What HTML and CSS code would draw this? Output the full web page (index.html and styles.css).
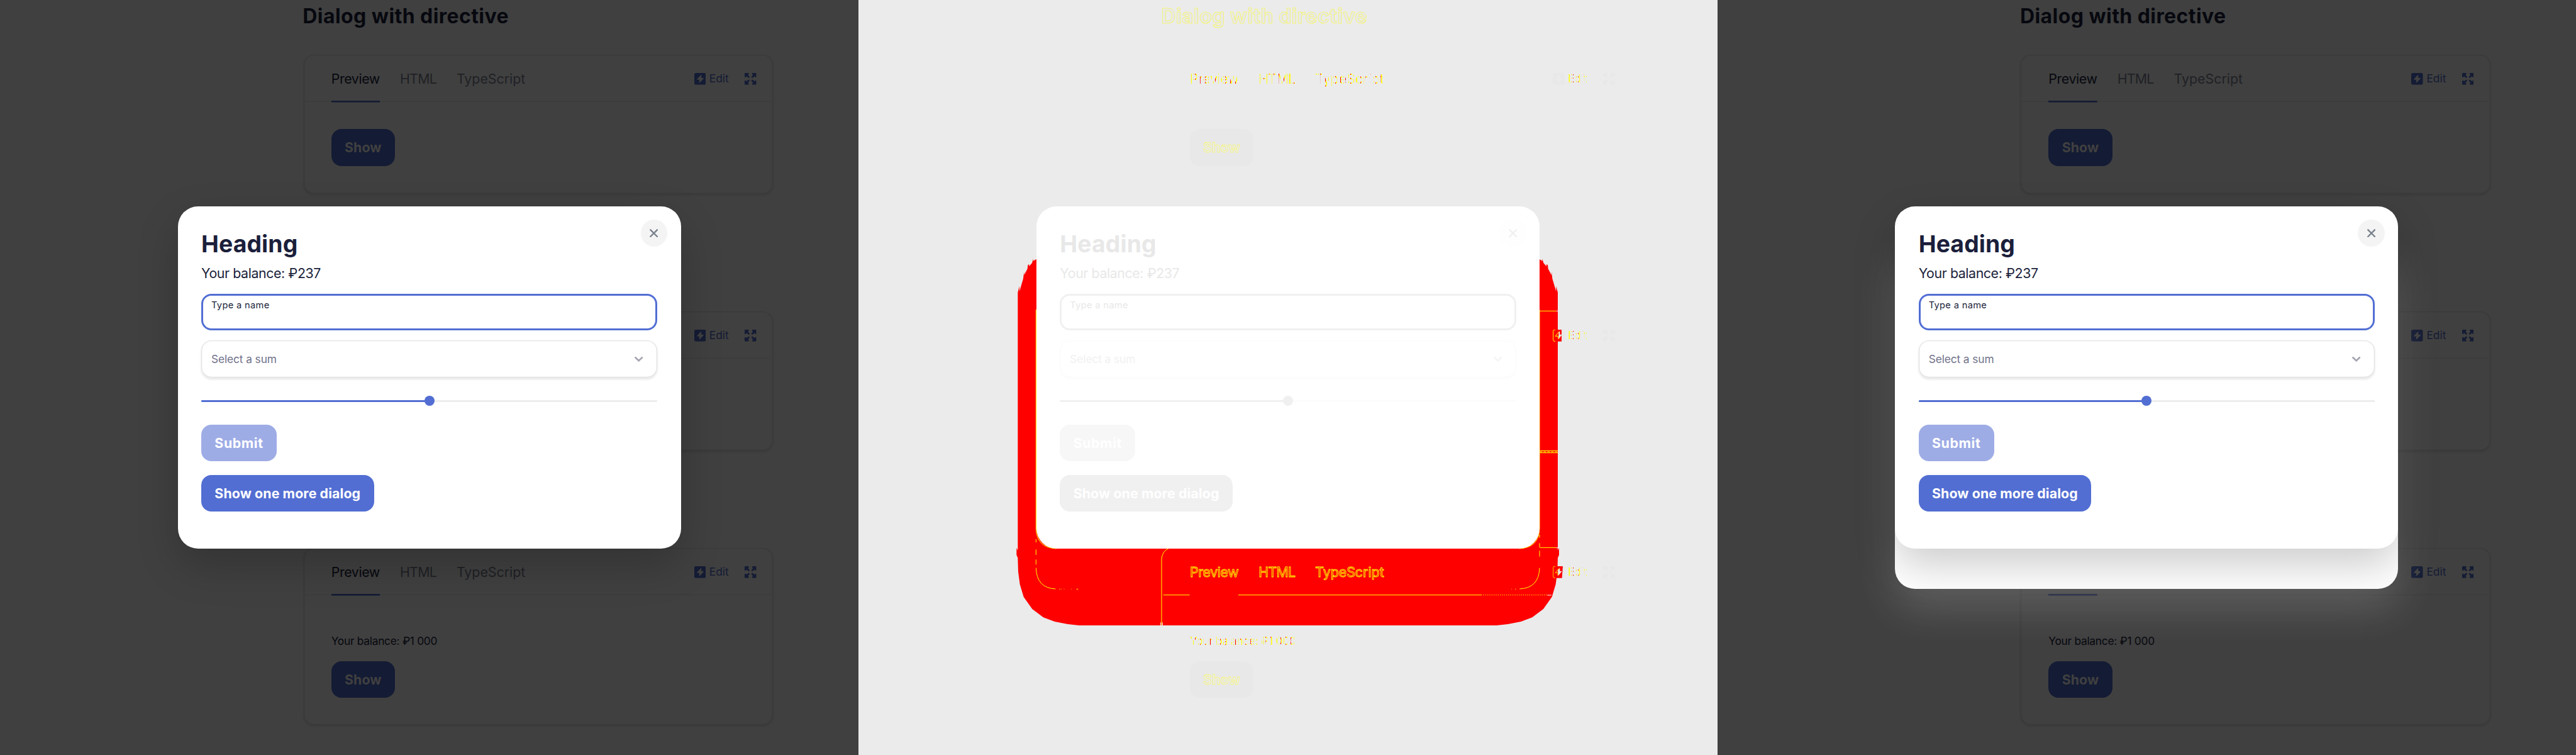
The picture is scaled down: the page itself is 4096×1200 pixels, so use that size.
FILE: index.html
```
<!DOCTYPE html>
<html lang="en">
<head>
<meta charset="utf-8">
<title>Dialog visual comparison</title>
<link rel="stylesheet" href="styles.css">
</head>
<body>
<svg class="defs" aria-hidden="true">
  <symbol id="bolt" viewBox="0 0 28 28"><path fill-rule="evenodd" fill="currentColor" d="M4 0H24Q28 0 28 4V24Q28 28 24 28H4Q0 28 0 24V4Q0 0 4 0ZM15.5 5L6.5 14.5Q5.5 16 7 16.3H12.3L11.5 22Q12 23.6 13.3 22.8L22 13.5Q22.6 12 21.3 11.8H16.2L17.3 6Q17 4.300 15.500 5Z"/></symbol>
  <symbol id="expand" viewBox="0 0 28 28"><g fill="currentColor"><path id="arm" d="M1 0H9Q11.500 .8 9.700 3L8 4.600L11.800 9Q12.200 12 9 11.800L4.600 8L3 9.700Q.8 11.500 0 9V1Z"/><use href="#arm" transform="matrix(-1 0 0 1 28 0)"/><use href="#arm" transform="matrix(1 0 0 -1 0 28)"/><use href="#arm" transform="matrix(-1 0 0 -1 28 28)"/></g></symbol>
  <symbol id="cross" viewBox="0 0 20 20"><path d="M2 2L18 18M18 2L2 18" fill="none" stroke="currentColor" stroke-width="3.600" stroke-linecap="round"/></symbol>
  <symbol id="chevron" viewBox="0 0 20 12"><path d="M2 2L10 9.500L18 2" fill="none" stroke="currentColor" stroke-width="4" stroke-linecap="round"/></symbol>
</svg>

<main class="panes">
  <section class="pane">
    <div class="page">
      <h2 class="title">Dialog with directive</h2>
      <article class="card">
        <header class="head"><nav class="tabs"><span class="tab active">Preview</span><span class="tab html">HTML</span><span class="tab ts">TypeScript</span></nav><span class="edit"><svg class="icon"><use href="#bolt"/></svg>Edit</span><svg class="icon"><use href="#expand"/></svg></header>
        <div class="body"><button class="btn show">Show</button></div>
      </article>
      <article class="card second">
        <header class="head"><span class="edit"><svg class="icon"><use href="#bolt"/></svg>Edit</span><svg class="icon"><use href="#expand"/></svg></header>
      </article>
      <article class="card third">
        <header class="head"><nav class="tabs"><span class="tab active">Preview</span><span class="tab html">HTML</span><span class="tab ts">TypeScript</span></nav><span class="edit"><svg class="icon"><use href="#bolt"/></svg>Edit</span><svg class="icon"><use href="#expand"/></svg></header>
        <div class="body tall"><p class="note">Your balance: ₽1 000</p><button class="btn show">Show</button></div>
      </article>
    </div>
    <div class="dialog">
      <span class="close"><svg><use href="#cross"/></svg></span>
      <h1 class="heading">Heading</h1>
      <p class="balance">Your balance: ₽237</p>
      <div class="field"><span class="label">Type a name</span></div>
      <div class="select"><span>Select a sum</span><svg><use href="#chevron"/></svg></div>
      <div class="slider"><i class="thumb"></i></div>
      <button class="btn submit">Submit</button>
      <button class="btn more">Show one more dialog</button>
    </div>
  </section>

  <section class="pane diff">
    <svg class="mask" viewBox="0 0 2048 1800">
      <path fill="#f00" d="M424 618L417 622V617L414 627L407 635V630L404 632L403 641L395 656V647L393 664L384 695V682L380 697V1312L377 1306V1323L380 1330L381 1363L385 1393L394 1423L414.500 1452L441 1472L468 1482L499 1488L526 1491H1522L1549 1488L1580 1482L1607 1472L1633.500 1452L1654 1423L1663 1393L1667 1363L1668 1330L1671 1323V1306L1668 1312V697L1664 682V695L1655 664L1653 647V656L1645 641L1644 632L1641 630V635L1634 627L1631 617V622L1624 618Z"/>
      <g fill="none" stroke="#ff0" stroke-width="1.500">
        <path d="M423.500 738V1260Q425 1306 472 1308"/>
        <path d="M1624.500 738V1260Q1623 1306 1576 1308"/>
        <path d="M423.500 1285v8M423.500 1310v13M423.500 1334v12M423.500 1354Q425 1402 470 1404M479 1404.500h2M483 1404.500h1M490 1404.500h1M507 1404.500h1M520 1404.500h4"/>
        <path d="M1624.500 1275v7M1624.500 1295v10M1624.500 1313v14M1624.500 1354Q1623 1402 1577 1404M1568 1404.500h-2M1558 1404.500h-1"/>
        <path d="M739 1308Q725 1314 723 1332V1491M727 1418.500H790M906 1418.500H1485"/>
        <path d="M1485 1418.500H1642" stroke-dasharray="2 3"/>
        <path d="M1625 741.500H1664M1625 1305.500H1664"/>
        <path d="M1625 1074.500H1668M1625 1079.500H1668" />
        <path d="M1625 1077H1668" stroke-dasharray="6 3"/>
      </g>
      <path d="M721 1484v7M725 1484v7M1643 1419h10M1664 741.500h5M1664 1306h6" stroke="#fff" stroke-width="1.500"/>
    </svg>
    <div class="page">
      <h2 class="title">Dialog with directive</h2>
      <article class="card">
        <header class="head"><nav class="tabs"><span class="tab active">Preview</span><span class="tab html">HTML</span><span class="tab ts">TypeScript</span></nav><span class="edit"><svg class="icon"><use href="#bolt"/></svg><span class="edit-text">Edit</span></span><svg class="icon"><use href="#expand"/></svg></header>
        <div class="body"><button class="btn show">Show</button></div>
      </article>
      <article class="card second">
        <header class="head"><span class="edit"><svg class="icon" viewBox="0 0 28 28"><path fill="#e8e8e8" d="M20 0H24Q28 0 28 4V24Q28 28 24 28H20Z"/><path fill="#f00" d="M4 0H21V28H4Q0 28 0 24V4Q0 0 4 0Z"/><path fill="#ebebeb" d="M14 5L17 4V11.500H22L14 23Z"/><path d="M6 .5H3Q1 1 1 4V24Q1 27 3 27.500H6M15 5L6 15.500H13V22" fill="none" stroke="#ff0" stroke-width="1.500"/></svg><span class="edit-text">Edit</span></span><svg class="icon"><use href="#expand"/></svg></header>
      </article>
      <article class="card third">
        <header class="head"><nav class="tabs hot"><span class="tab active">Preview</span><span class="tab html">HTML</span><span class="tab ts">TypeScript</span></nav><span class="edit"><svg class="icon" viewBox="0 0 28 28"><path fill="#e8e8e8" d="M22 0H24Q28 0 28 4V24Q28 28 24 28H20Z"/><path fill="#f00" d="M4 0H24L22 28H4Q0 28 0 24V4Q0 0 4 0Z"/><path fill="#ebebeb" d="M12 9L17 4V11.500H22L13 23Z"/><path d="M6 .5H3Q1 1 1 4V24Q1 27 3 27.500H6M15 5L6 15.500H12V22" fill="none" stroke="#ff0" stroke-width="1.200"/></svg><span class="edit-text">Edit</span></span><svg class="icon"><use href="#expand"/></svg></header>
        <div class="body tall"><p class="note">Your balance: ₽1 000</p><button class="btn show">Show</button></div>
      </article>
    </div>
    <div class="dialog">
      <span class="close"><svg><use href="#cross"/></svg></span>
      <h1 class="heading">Heading</h1>
      <p class="balance">Your balance: ₽237</p>
      <div class="field"><span class="label">Type a name</span></div>
      <div class="select"><span>Select a sum</span><svg><use href="#chevron"/></svg></div>
      <div class="slider"><i class="thumb"></i></div>
      <button class="btn submit">Submit</button>
      <button class="btn more">Show one more dialog</button>
    </div>
  </section>

  <section class="pane">
    <div class="page">
      <h2 class="title">Dialog with directive</h2>
      <article class="card">
        <header class="head"><nav class="tabs"><span class="tab active">Preview</span><span class="tab html">HTML</span><span class="tab ts">TypeScript</span></nav><span class="edit"><svg class="icon"><use href="#bolt"/></svg>Edit</span><svg class="icon"><use href="#expand"/></svg></header>
        <div class="body"><button class="btn show">Show</button></div>
      </article>
      <article class="card second">
        <header class="head"><span class="edit"><svg class="icon"><use href="#bolt"/></svg>Edit</span><svg class="icon"><use href="#expand"/></svg></header>
      </article>
      <article class="card third">
        <header class="head"><nav class="tabs"><span class="tab active"></span></nav><span class="edit"><svg class="icon"><use href="#bolt"/></svg>Edit</span><svg class="icon"><use href="#expand"/></svg></header>
        <div class="body tall"><p class="note">Your balance: ₽1 000</p><button class="btn show">Show</button></div>
      </article>
    </div>
    <div class="backdrop-dialog"></div>
    <div class="dialog">
      <span class="close"><svg><use href="#cross"/></svg></span>
      <h1 class="heading">Heading</h1>
      <p class="balance">Your balance: ₽237</p>
      <div class="field"><span class="label">Type a name</span></div>
      <div class="select"><span>Select a sum</span><svg><use href="#chevron"/></svg></div>
      <div class="slider"><i class="thumb"></i></div>
      <button class="btn submit">Submit</button>
      <button class="btn more">Show one more dialog</button>
    </div>
  </section>
</main>
</body>
</html>
```
FILE: styles.css
```
/* three panes of 20.48rem by 18rem fill the window width */
html { font-size: calc(100vw / 61.44); }
* { box-sizing: border-box; margin: 0; padding: 0; }
body { font-family: Inter, "Liberation Sans", sans-serif; overflow: hidden; }
.defs { position: absolute; width: 0; height: 0; }
.panes { display: flex; }

.pane {
  --bg: #404040;
  --line: #3a3a3a;
  --ink: #07080f;
  --muted: #1f2125;
  --accent: #141b34;
  --btn-text: #404040;
  --card-shadow: 0 .03rem .06rem rgba(0, 0, 0, .12);
  --d-ink: #1b1f3b;
  --d-accent: #526ed3;
  --d-submit: #9eace6;
  --d-close: #f4f4f4;
  --d-cross: #79818c;
  --d-line: #e4e4e4;
  --d-soft: #70728a;
  --d-chevron: #a4a5b1;
  --d-track: #ededed;
  --d-shadow: 0 .4rem 1rem rgba(0, 0, 0, .2);
  --d-field-shadow: 0 .04rem .06rem rgba(0, 0, 0, .1);
  position: relative;
  flex: none;
  width: 20.48rem;
  height: 18rem;
  overflow: hidden;
  background: var(--bg);
}
.diff {
  --bg: #ebebeb;
  --line: transparent;
  --ink: #e8e8e8;
  --muted: #e9e9e9;
  --accent: #e8e8e8;
  --btn-text: #ebebeb;
  --card-shadow: 0 0 0 transparent;
  --d-ink: #e8e8e8;
  --d-accent: #f0f0f0;
  --d-submit: #f7f7f7;
  --d-close: #fefefe;
  --d-cross: #f0f0f0;
  --d-line: #fbfbfb;
  --d-soft: #f1f1f1;
  --d-chevron: #f5f5f5;
  --d-track: #fcfcfc;
  --d-shadow: none;
  --d-field-shadow: 0 .04rem .06rem rgba(0, 0, 0, .012);
}
.mask { position: absolute; inset: 0; width: 100%; height: 100%; }

.page { position: relative; width: 11.2rem; margin-left: 7.24rem; padding-top: .085rem; }
.title { margin-left: -.02rem; font-size: .48rem; line-height: .6rem; font-weight: 700; letter-spacing: .0135em; color: var(--ink); white-space: nowrap; }
.card { height: 3.32rem; margin-top: .615rem; border-radius: .24rem; box-shadow: inset 0 0 0 .02rem var(--line), var(--card-shadow); }
.second { margin-top: 2.8rem; }
.third { height: 4.22rem; margin-top: 2.32rem; }
.head { display: flex; align-items: center; height: 1.14rem; padding: .02rem .4rem 0 .66rem; background: linear-gradient(var(--line), var(--line)) bottom / calc(100% - .04rem) .02rem no-repeat; }
.tabs { display: flex; align-self: stretch; gap: .48rem; font-size: .32rem; line-height: 1.12rem; color: var(--muted); }
.tab { flex: none; white-space: nowrap; }
.active { width: 1.16rem; color: var(--ink); letter-spacing: -.018em; background: linear-gradient(var(--accent), var(--accent)) bottom / 100% .04rem no-repeat; }
.html { width: .87rem; letter-spacing: -.034em; }
.edit { display: flex; align-items: center; gap: .08rem; margin-left: auto; margin-right: .38rem; font-size: .26rem; line-height: .4rem; color: var(--accent); }
.icon { width: .28rem; height: .28rem; color: var(--accent); }
.body { padding: .64rem .66rem; }
.tall { padding-top: .895rem; }
.note { margin-bottom: .265rem; font-size: .26rem; line-height: .4rem; letter-spacing: -.0155em; color: var(--ink); }

.btn { display: block; height: .88rem; padding: 0 0 0 .32rem; border: 0; border-radius: .24rem; font: 700 .32rem/.88rem Inter, "Liberation Sans", sans-serif; letter-spacing: .005em; text-align: left; white-space: nowrap; color: #fff; background: var(--d-accent); }
.show { width: 1.52rem; color: var(--btn-text); background: var(--accent); }

/* change highlighting on the page text of the comparison pane */
.diff .title { -webkit-text-stroke: .0075rem #ff0; }
.diff .show { -webkit-text-stroke: .006rem #ff0; }
.diff .tab, .diff .edit-text, .diff .note {
  color: transparent;
  background: repeating-linear-gradient(90deg, #f00 0 1px, #ff0 1px 3px, #e9e9e9 3px 5px, #ff0 5px 6px, #e9e9e9 6px 8px);
  -webkit-background-clip: text;
  background-clip: text;
}
.diff .hot .tab { color: #f00; background: none; -webkit-text-stroke: .0125rem #ff0; }

.dialog { position: absolute; left: 4.24rem; top: 4.92rem; width: 12rem; height: 8.16rem; padding: .536rem .56rem 0; border-radius: .48rem; background: #fff; color: var(--d-ink); box-shadow: var(--d-shadow); }
.backdrop-dialog { position: absolute; left: 4.24rem; top: 5.8rem; width: 12rem; height: 8.24rem; border-radius: .48rem; background: #fff; box-shadow: 0 .4rem 1rem rgba(255, 255, 255, .18); }
.close { position: absolute; top: .32rem; right: .32rem; display: grid; place-items: center; width: .64rem; height: .64rem; border-radius: 50%; background: var(--d-close); color: var(--d-cross); }
.close svg { width: .2rem; height: .2rem; }
.heading { font-size: .56rem; line-height: .72rem; font-weight: 700; letter-spacing: .003em; }
.balance { margin-top: .0975rem; font-size: .32rem; line-height: .48rem; letter-spacing: -.019em; }
.field { height: .88rem; margin-top: .2465rem; padding: .115rem .195rem; border: 3px solid var(--d-accent); border-radius: .24rem; }
.label { display: block; font-size: .22rem; line-height: .24rem; letter-spacing: .022em; }
.select { display: flex; align-items: center; justify-content: space-between; height: .88rem; margin-top: .24rem; padding: 0 .34rem 0 .24rem; border-radius: .24rem; box-shadow: inset 0 0 0 .02rem var(--d-line), var(--d-field-shadow); font-size: .26rem; letter-spacing: -.006em; color: var(--d-soft); }
.select svg { width: .2rem; height: .12rem; color: var(--d-chevron); }
.slider { display: flex; justify-content: center; align-items: center; height: .04rem; margin: .54rem 0; border-radius: .02rem; background: linear-gradient(90deg, var(--d-accent) 50%, var(--d-track) 50%); }
.thumb { flex: none; width: .24rem; height: .24rem; border-radius: 50%; background: var(--d-accent); }
.submit { width: 1.8rem; letter-spacing: .028em; background: var(--d-submit); }
.more { width: 4.12rem; margin-top: .32rem; }
```
